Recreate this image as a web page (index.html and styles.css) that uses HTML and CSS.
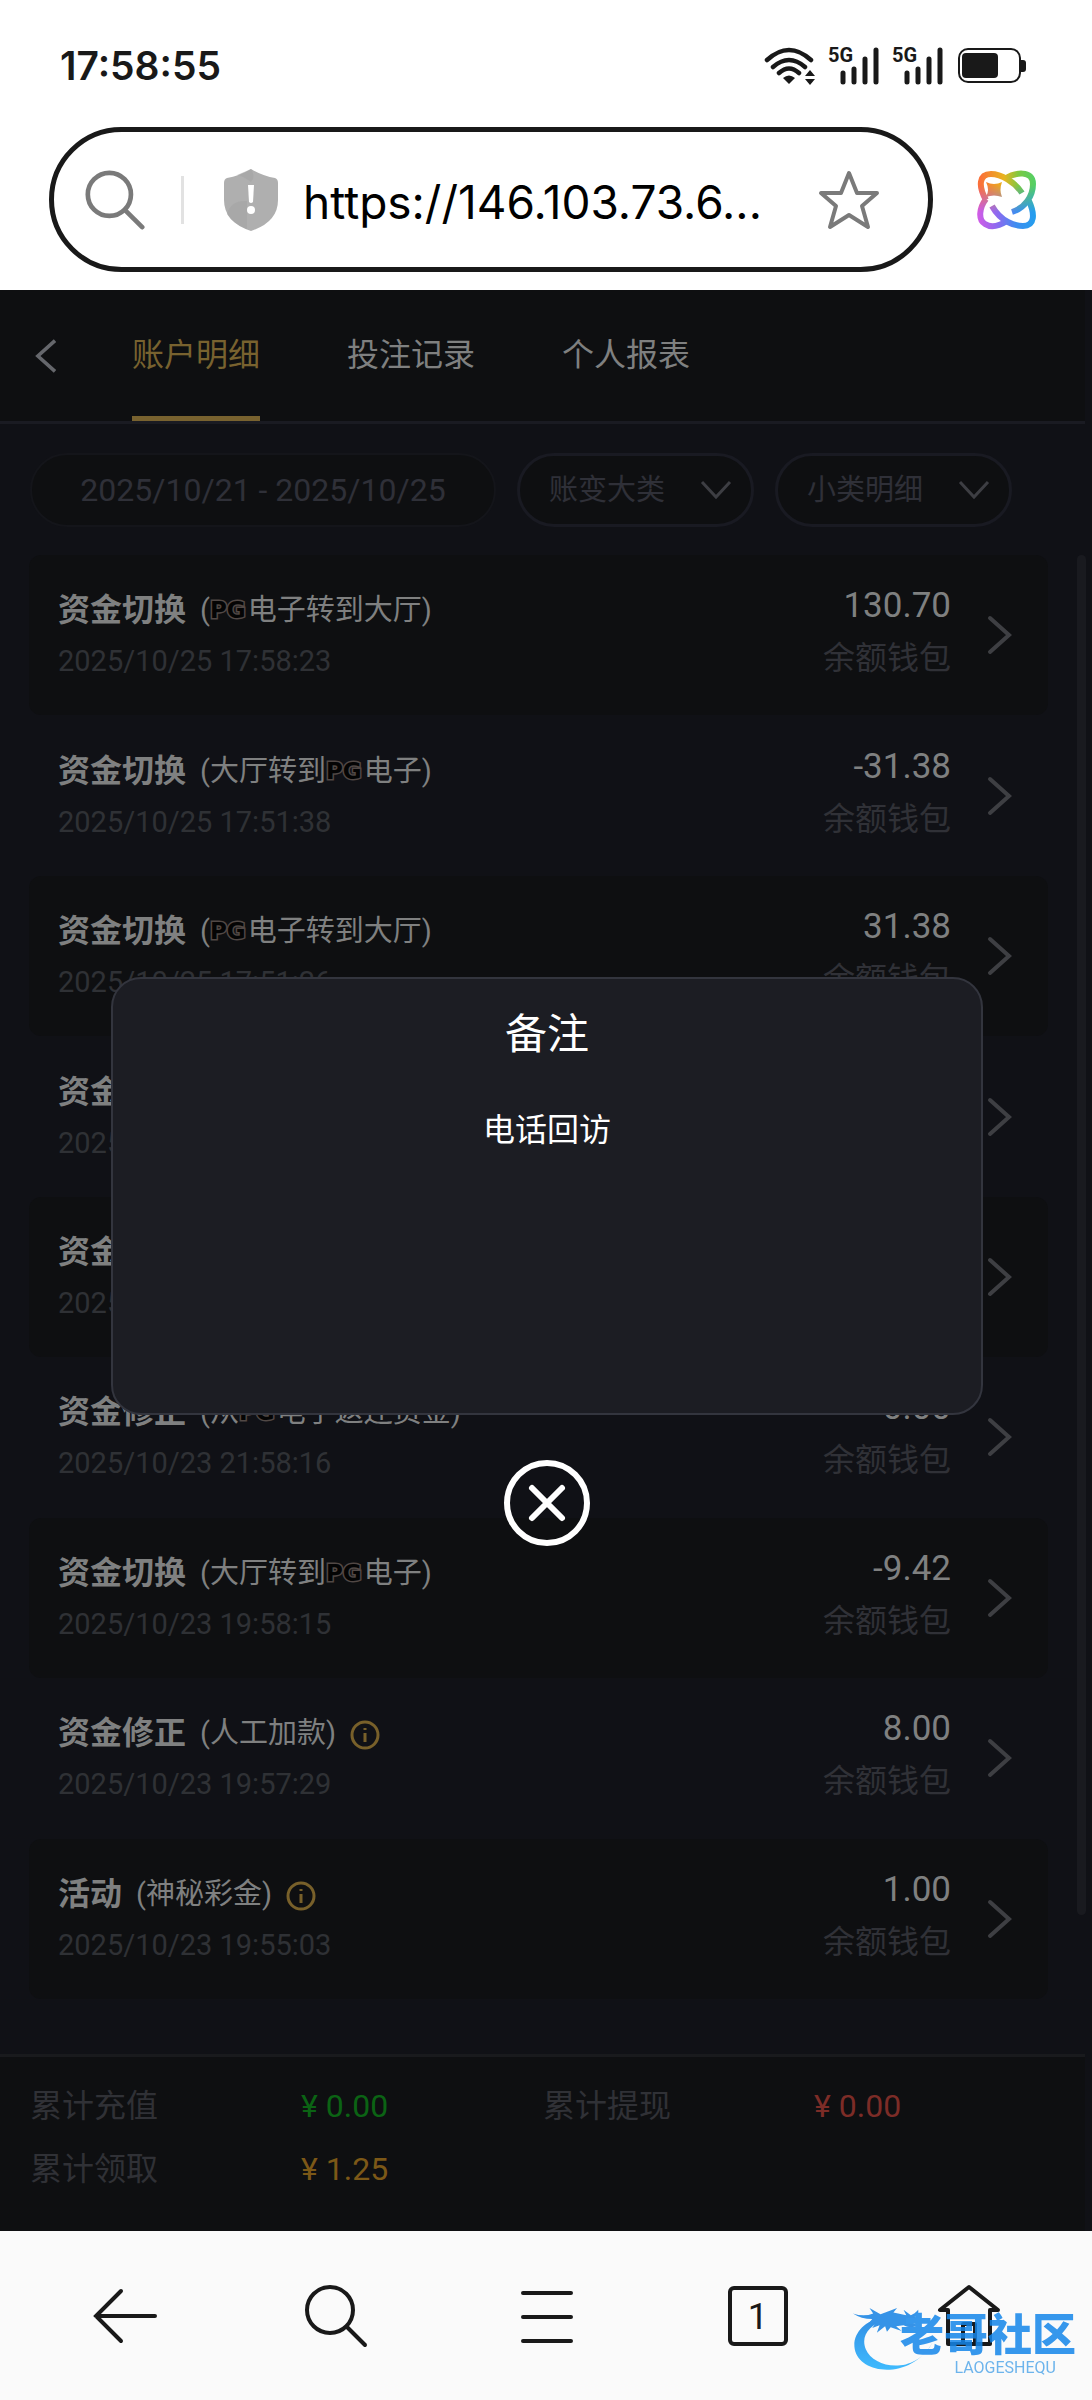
FILE: index.html
```html
<!DOCTYPE html>
<html lang="zh-CN">
<head>
	<meta charset="UTF-8">
	<meta name="viewport" content="width=device-width, initial-scale=1.0">
	<title>账户明细</title>
	<link rel="stylesheet" href="styles.css">
</head>
<body>
	<!-- 图标 -->
	<svg class="defs" width="0" height="0">
		<symbol id="arrow" viewBox="0 0 26 40"><path d="M3 3l19 17L3 37"/></symbol>
		<symbol id="down" viewBox="0 0 32 22"><path d="M2 3l14 15L30 3"/></symbol>
		<symbol id="info" viewBox="0 0 30 30"><circle cx="15" cy="15" r="13"/><path d="M15 13v9M15 8v2"/></symbol>
		<symbol id="search" viewBox="0 0 64 64"><circle cx="26" cy="26" r="23"/><path d="M43 43l18 18"/></symbol>
		<symbol id="signal" viewBox="0 0 50 38"><path d="M13 26v9M24 22v13M35 12v23M46 3v32"/></symbol>
	</svg>

	<header class="status">
		<span class="time">17:58:55</span>
		<div class="status-icons">
			<svg class="wifi" viewBox="0 0 52 40">
				<path d="M3 14Q25-6 47 14M9 21Q25 7 41 21M15 27Q25 18 35 27" fill="none" stroke="#191919" stroke-width="4.500" stroke-linecap="round"/>
				<path d="M25 38l-6-6q6-5 12 0z"/>
				<path d="M46 24l5 6H41zM46 39l5-6H41z"/>
			</svg>
			<span class="net"><b>5G</b><svg><use href="#signal"/></svg></span>
			<span class="net"><b>5G</b><svg><use href="#signal"/></svg></span>
			<svg class="battery" viewBox="0 0 68 36">
				<rect x="1" y="1" width="61" height="33" rx="9" fill="none" stroke="#191919" stroke-width="2"/>
				<rect x="4" y="5" width="36" height="25" rx="4"/>
				<path d="M62 12h3q3 0 3 3v6q0 3-3 3h-3z"/>
			</svg>
		</div>
	</header>

	<div class="address">
		<div class="url-box">
			<svg class="url-search"><use href="#search"/></svg>
			<i class="divider"></i>
			<svg class="shield" viewBox="0 0 56 62">
				<path fill="#afafaf" d="M28 0Q40 7 52 9q3 1 3 5v17q0 22-27 31Q1 53 1 31V14q0-4 3-5Q16 7 28 0z"/>
				<path fill="#a2a2a2" d="M28 0q5 8 0 13-8-6-14-7zM4 45q4-14 20-13v28Q10 55 4 45z" opacity=".5"/>
				<path fill="#fff" d="M25 16h6l-1 17q-2 2-4 0z"/>
				<circle cx="28" cy="41" r="4" fill="#fff"/>
			</svg>
			<input class="url" type="text" value="https://146.103.73.6..." aria-label="网址">
			<button class="star" aria-label="收藏">
				<svg viewBox="0 0 62 60"><path d="M31 3l8 20h20L44 36l6 21-19-12-19 12 6-21L3 23h20z"/></svg>
			</button>
		</div>
		<button class="ai" aria-label="助手">
			<svg viewBox="0 0 60 60">
				<defs>
					<linearGradient id="top"><stop offset=".05" stop-color="#fb7038"/><stop offset=".45" stop-color="#e8b41f"/><stop offset=".7" stop-color="#7ac943"/><stop offset="1" stop-color="#4ed06a"/></linearGradient>
					<linearGradient id="bottom"><stop offset="0" stop-color="#d45be6"/><stop offset=".35" stop-color="#8a6bf0"/><stop offset=".65" stop-color="#3f8df0"/><stop offset="1" stop-color="#21a0ee"/></linearGradient>
					<linearGradient id="fade" x2="0" y2="1"><stop offset=".25" stop-color="#000"/><stop offset=".7" stop-color="#fff"/></linearGradient>
					<mask id="fadeMask"><rect width="60" height="60" fill="url(#fade)"/></mask>
					<mask id="rings">
						<g fill="none" stroke="#fff" stroke-width="6">
							<path d="M45 23C38 12 24 4 14 4 2 4 1 16 9 30"/>
							<path d="M15 36C24 52 38 56 46 56 58 56 58 44 52 31"/>
							<path d="M28 9C38 2 56 0 56 14 56 26 48 38 35 42"/>
							<path d="M9 29C2 38 1 50 8 54 14 58 22 56 30 51"/>
						</g>
						<path fill="#fff" d="M9 12q8 4 16 0-3 8 0 15-8-3-16 0 4-7 0-15z"/>
					</mask>
				</defs>
				<g mask="url(#rings)">
					<rect width="60" height="60" fill="url(#top)"/>
					<rect width="60" height="60" fill="url(#bottom)" mask="url(#fadeMask)"/>
				</g>
			</svg>
		</button>
	</div>

	<main class="page">
		<nav class="tabs">
			<button class="back" aria-label="返回"><svg><use href="#arrow"/></svg></button>
			<a href="#" class="current">账户明细</a>
			<a href="#">投注记录</a>
			<a href="#">个人报表</a>
		</nav>

		<div class="filters">
			<input class="date" type="text" value="2025/10/21 - 2025/10/25" aria-label="日期">
			<label class="pick">
				<select aria-label="账变大类"><option>账变大类</option></select>
				<svg><use href="#down"/></svg>
			</label>
			<label class="pick">
				<select aria-label="小类明细"><option>小类明细</option></select>
				<svg><use href="#down"/></svg>
			</label>
		</div>

		<div class="content">
			<ul class="records">
				<li>
					<div class="info"><h3>资金切换<small>(<em>PG</em>电子转到大厅)</small></h3><time>2025/10/25 17:58:23</time></div>
					<div class="money"><strong>130.70</strong><span>余额钱包</span></div>
					<svg class="go"><use href="#arrow"/></svg>
				</li>
				<li>
					<div class="info"><h3>资金切换<small>(大厅转到<em>PG</em>电子)</small></h3><time>2025/10/25 17:51:38</time></div>
					<div class="money"><strong>-31.38</strong><span>余额钱包</span></div>
					<svg class="go"><use href="#arrow"/></svg>
				</li>
				<li>
					<div class="info"><h3>资金切换<small>(<em>PG</em>电子转到大厅)</small></h3><time>2025/10/25 17:51:26</time></div>
					<div class="money"><strong>31.38</strong><span>余额钱包</span></div>
					<svg class="go"><use href="#arrow"/></svg>
				</li>
				<li>
					<div class="info"><h3>资金</h3><time>2025</time></div>
					<div class="money"></div>
					<svg class="go"><use href="#arrow"/></svg>
				</li>
				<li>
					<div class="info"><h3>资金</h3><time>2025</time></div>
					<div class="money"></div>
					<svg class="go"><use href="#arrow"/></svg>
				</li>
				<li>
					<div class="info"><h3>资金修正<small>(从<em>PG</em>电子返还资金)</small></h3><time>2025/10/23 21:58:16</time></div>
					<div class="money"><strong>0.00</strong><span>余额钱包</span></div>
					<svg class="go"><use href="#arrow"/></svg>
				</li>
				<li>
					<div class="info"><h3>资金切换<small>(大厅转到<em>PG</em>电子)</small></h3><time>2025/10/23 19:58:15</time></div>
					<div class="money"><strong>-9.42</strong><span>余额钱包</span></div>
					<svg class="go"><use href="#arrow"/></svg>
				</li>
				<li>
					<div class="info"><h3>资金修正<small>(人工加款)</small><svg class="tip"><use href="#info"/></svg></h3><time>2025/10/23 19:57:29</time></div>
					<div class="money"><strong>8.00</strong><span>余额钱包</span></div>
					<svg class="go"><use href="#arrow"/></svg>
				</li>
				<li>
					<div class="info"><h3>活动<small>(神秘彩金)</small><svg class="tip"><use href="#info"/></svg></h3><time>2025/10/23 19:55:03</time></div>
					<div class="money"><strong>1.00</strong><span>余额钱包</span></div>
					<svg class="go"><use href="#arrow"/></svg>
				</li>
			</ul>
			<i class="scrollbar"></i>
		</div>

		<dl class="totals">
			<dt>累计充值</dt><dd class="green">¥ 0.00</dd>
			<dt>累计提现</dt><dd class="red">¥ 0.00</dd>
			<dt>累计领取</dt><dd class="gold">¥ 1.25</dd>
		</dl>

		<!-- 弹窗 -->
		<div class="overlay">
			<div class="dialog" role="dialog" aria-labelledby="remark">
				<h2 id="remark">备注</h2>
				<p>电话回访</p>
			</div>
			<button class="close" aria-label="关闭">
				<svg viewBox="0 0 88 88"><circle cx="44" cy="44" r="40"/><path d="M29 29l30 30M59 29L29 59"/></svg>
			</button>
		</div>
	</main>

	<footer class="toolbar">
		<button aria-label="后退"><svg viewBox="0 0 64 64"><path d="M62 32H3M28 7L3 32l25 25"/></svg></button>
		<button aria-label="搜索"><svg><use href="#search"/></svg></button>
		<button aria-label="菜单"><svg viewBox="0 0 64 64"><path d="M8 9h48M8 33h48M8 57h48"/></svg></button>
		<button aria-label="标签页"><span class="count">1</span></button>
		<button aria-label="主页"><svg viewBox="0 0 64 64"><path d="M32 3L3 26h8v34h42V26h8zM26 60V40h12v20" stroke-linejoin="round"/></svg></button>
		<div class="mark">
			<svg class="dragon" viewBox="0 0 100 80">
				<defs><linearGradient id="blue" x2="0" y2="1"><stop offset="0" stop-color="#0f7be0"/><stop offset="1" stop-color="#1fb0ff"/></linearGradient></defs>
				<path fill="url(#blue)" d="M34 14C12 18 0 34 3 49c5 27 60 35 85-8C68 78 24 70 15 49 9 34 19 22 38 16z"/>
				<path fill="#1482e4" d="M1 10q12 4 22 0l-4-6 12 7 8-3 10-4-4 5 14 3-3-6 8 6q5-2 8-6 1 6-4 8l5 1q-3 5-10 4l9 4q-8 4-16 0l-8 1 6 5-12-4-4 5-2-6-9 7 3-8-8 3 4-6-8 1 4-5Q10 16 1 10z"/>
			</svg>
			<span class="mark-name">老哥社区</span>
			<span class="mark-sub">LAOGESHEQU</span>
		</div>
	</footer>
</body>
</html>
```
FILE: styles.css
```css
* {
    padding: 0;
    margin: 0;
    box-sizing: border-box;
    list-style: none;
    border: 0;
}

body {
    display: flex;
    flex-direction: column;
    min-height: 100vh;
    background: #fff;
    font-family: Roboto, "Noto Sans CJK SC", sans-serif;
    font-size: 32px;
}

button, input, select {
    background: none;
    font: inherit;
    color: inherit;
    outline: none;
}

svg {
    display: block;
    flex-shrink: 0;
}

.defs {
    position: absolute;
}

a {
    color: inherit;
    text-decoration: none;
}

/* 状态栏 */
.status {
    display: flex;
    justify-content: space-between;
    align-items: center;
    height: 127px;
    padding: 4px 66px 0 60px;
    color: #191919;
}

.time {
    font-family: Inter, sans-serif;
    font-size: 39px;
    font-weight: 600;
}

.status-icons {
    display: flex;
    align-items: center;
    gap: 14px;
}

.wifi {
    width: 52px;
    height: 40px;
    fill: #191919;
}

.net {
    position: relative;
    width: 50px;
    height: 38px;
}

.net b {
    position: absolute;
    left: -2px;
    top: 0;
    font-size: 20px;
    line-height: 16px;
}

.net svg {
    width: 50px;
    height: 38px;
    stroke: #191919;
    stroke-width: 5;
    stroke-linecap: round;
}

.battery {
    width: 68px;
    height: 36px;
    fill: #191919;
}

/* 地址栏 */
.address {
    display: flex;
    align-items: center;
    gap: 44px;
    padding: 0 55px 18px 49px;
}

.url-box {
    flex: 1;
    min-width: 0;
    display: flex;
    align-items: center;
    height: 145px;
    padding: 0 48px 0 31px;
    border: 5px solid #191919;
    border-radius: 73px;
}

.url-search {
    width: 60px;
    height: 60px;
    fill: none;
    stroke: #7a7a7a;
    stroke-width: 5;
    stroke-linecap: round;
}

.divider {
    width: 3px;
    height: 48px;
    margin: 0 39px 0 36px;
    background: #e2e2e2;
}

.shield {
    width: 56px;
    height: 62px;
}

.url {
    flex: 1;
    min-width: 0;
    margin-left: 24px;
    padding-top: 4px;
    font-family: Inter, sans-serif;
    font-size: 46px;
    color: #000;
}

.star svg {
    width: 62px;
    height: 60px;
    fill: none;
    stroke: #7a7a7a;
    stroke-width: 4;
    stroke-linejoin: round;
}

.ai svg {
    width: 60px;
    height: 60px;
}

/* 页面 */
.page {
    position: relative;
    flex: 1;
    display: flex;
    flex-direction: column;
    background: #101116;
    color: #7f8080;
}

.tabs {
    display: flex;
    align-items: stretch;
    gap: 87px;
    height: 134px;
    margin-right: 7px;
    padding-left: 34px;
    background: #0e0f11;
    border-bottom: 3px solid #1a1b22;
}

.tabs a {
    padding-top: 41px;
    line-height: 48px;
    border-bottom: 5px solid transparent;
}

.tabs a.current {
    color: #78622f;
    border-color: #78622f;
}

.back {
    width: 24px;
    margin-right: -13px;
}

.back svg {
    width: 24px;
    height: 36px;
    fill: none;
    stroke: #65676c;
    stroke-width: 4;
    transform: rotate(180deg);
}

.filters {
    display: flex;
    gap: 21px;
    padding: 29px 80px 28px 30px;
    color: #2f3038;
}

.date {
    flex: 1;
    min-width: 0;
    height: 74px;
    background: #0e0f11;
    border: 2px solid #14151a;
    border-radius: 37px;
    text-align: center;
}

.pick {
    display: flex;
    align-items: center;
    justify-content: space-between;
    width: 237px;
    height: 74px;
    padding: 0 19px 0 29px;
    background: #0e0f11;
    border: 3px solid #191a22;
    border-radius: 37px;
}

.pick select {
    appearance: none;
    font-size: 29px;
}

.pick svg {
    width: 32px;
    height: 22px;
    fill: none;
    stroke: #3d3e43;
    stroke-width: 3;
}

.content {
    flex: 1;
    display: flex;
    padding: 0 6px 55px 29px;
}

.records {
    flex: 1;
    display: flex;
    flex-direction: column;
}

.records li {
    flex: 1;
    display: flex;
    align-items: center;
    padding: 0 35px 0 29px;
    border-radius: 12px;
}

.records li:nth-child(odd) {
    background: #0e0f11;
}

.info {
    flex: 1;
    padding-top: 4px;
}

.info h3 {
    display: flex;
    align-items: center;
    height: 48px;
    font-size: 32px;
    line-height: 48px;
}

.info small {
    display: flex;
    align-items: center;
    margin-left: 14px;
    font-size: 29px;
    font-weight: normal;
}

.info em {
    margin-right: 2px;
    font: bold 23px "DejaVu Sans", sans-serif;
    color: #040404;
    -webkit-text-stroke: 3px #514845;
    paint-order: stroke fill;
}

.info time {
    display: block;
    font-size: 29px;
    line-height: 54px;
    color: #2f3135;
}

.tip {
    width: 30px;
    height: 30px;
    margin: 4px 0 0 14px;
    fill: none;
    stroke: #78602a;
    stroke-width: 3;
}

.money {
    display: flex;
    flex-direction: column;
    padding-bottom: 6px;
    line-height: 52px;
    text-align: right;
}

.money strong {
    font-size: 35px;
    font-weight: normal;
}

.money span {
    color: #303137;
}

.go {
    width: 26px;
    height: 40px;
    margin-left: 36px;
    fill: none;
    stroke: #3e3f43;
    stroke-width: 4;
    stroke-linecap: round;
}

.scrollbar {
    width: 9px;
    height: 1360px;
    margin-left: 29px;
    border-radius: 5px;
    background: #191a1f;
}

.totals {
    display: grid;
    grid-template-columns: 271px 1fr 271px 1fr;
    margin-right: 7px;
    padding: 18px 29px 30px 30px;
    background: #0e0f11;
    border-top: 3px solid #191a1d;
    line-height: 63px;
}

.totals dt {
    color: #303136;
}

.green {
    color: #0b6314;
}

.red {
    color: #7c2c27;
}

.gold {
    color: #7c5817;
}

/* 弹窗 */
.overlay {
    position: absolute;
    left: 0;
    top: 0;
    width: 100%;
    height: 100%;
    display: flex;
    flex-direction: column;
    align-items: center;
    justify-content: center;
    gap: 44px;
    padding: 2px 0 0 2px;
}

.dialog {
    width: 80%;
    min-height: 438px;
    padding: 25px;
    background: #1c1d23;
    border: 2px solid #33353e;
    border-radius: 30px;
    color: #fff;
    text-align: center;
}

.dialog h2 {
    font-size: 42px;
    font-weight: normal;
    line-height: 62px;
}

.dialog p {
    margin-top: 40px;
    line-height: 48px;
}

.close svg {
    width: 88px;
    height: 88px;
    fill: none;
    stroke: #fff;
    stroke-width: 6;
    stroke-linecap: round;
}

/* 底部工具栏 */
.toolbar {
    position: relative;
    display: flex;
    height: 169px;
    padding: 0 18px 0 20px;
    background: #fafafa;
    color: #191919;
}

.toolbar button {
    flex: 1;
    display: flex;
    align-items: center;
    justify-content: center;
}

.toolbar button svg {
    width: 64px;
    height: 64px;
    fill: none;
    stroke: #191919;
    stroke-width: 4;
    stroke-linecap: round;
}

.count {
    width: 60px;
    height: 60px;
    border: 4px solid #191919;
    border-radius: 6px;
    font-size: 36px;
    line-height: 54px;
}

.mark {
    position: absolute;
    right: 12px;
    bottom: 24px;
    width: 228px;
    height: 78px;
    opacity: .85;
}

.dragon {
    position: absolute;
    left: 0;
    top: 6px;
    width: 92px;
    height: 74px;
}

.mark-name {
    position: absolute;
    right: 4px;
    top: 14px;
    font-size: 44px;
    font-weight: 900;
    line-height: 48px;
    color: #1586ea;
}

.mark-sub {
    position: absolute;
    right: 24px;
    bottom: 0;
    font-size: 16px;
    line-height: 16px;
    color: #55a8ea;
}
```
